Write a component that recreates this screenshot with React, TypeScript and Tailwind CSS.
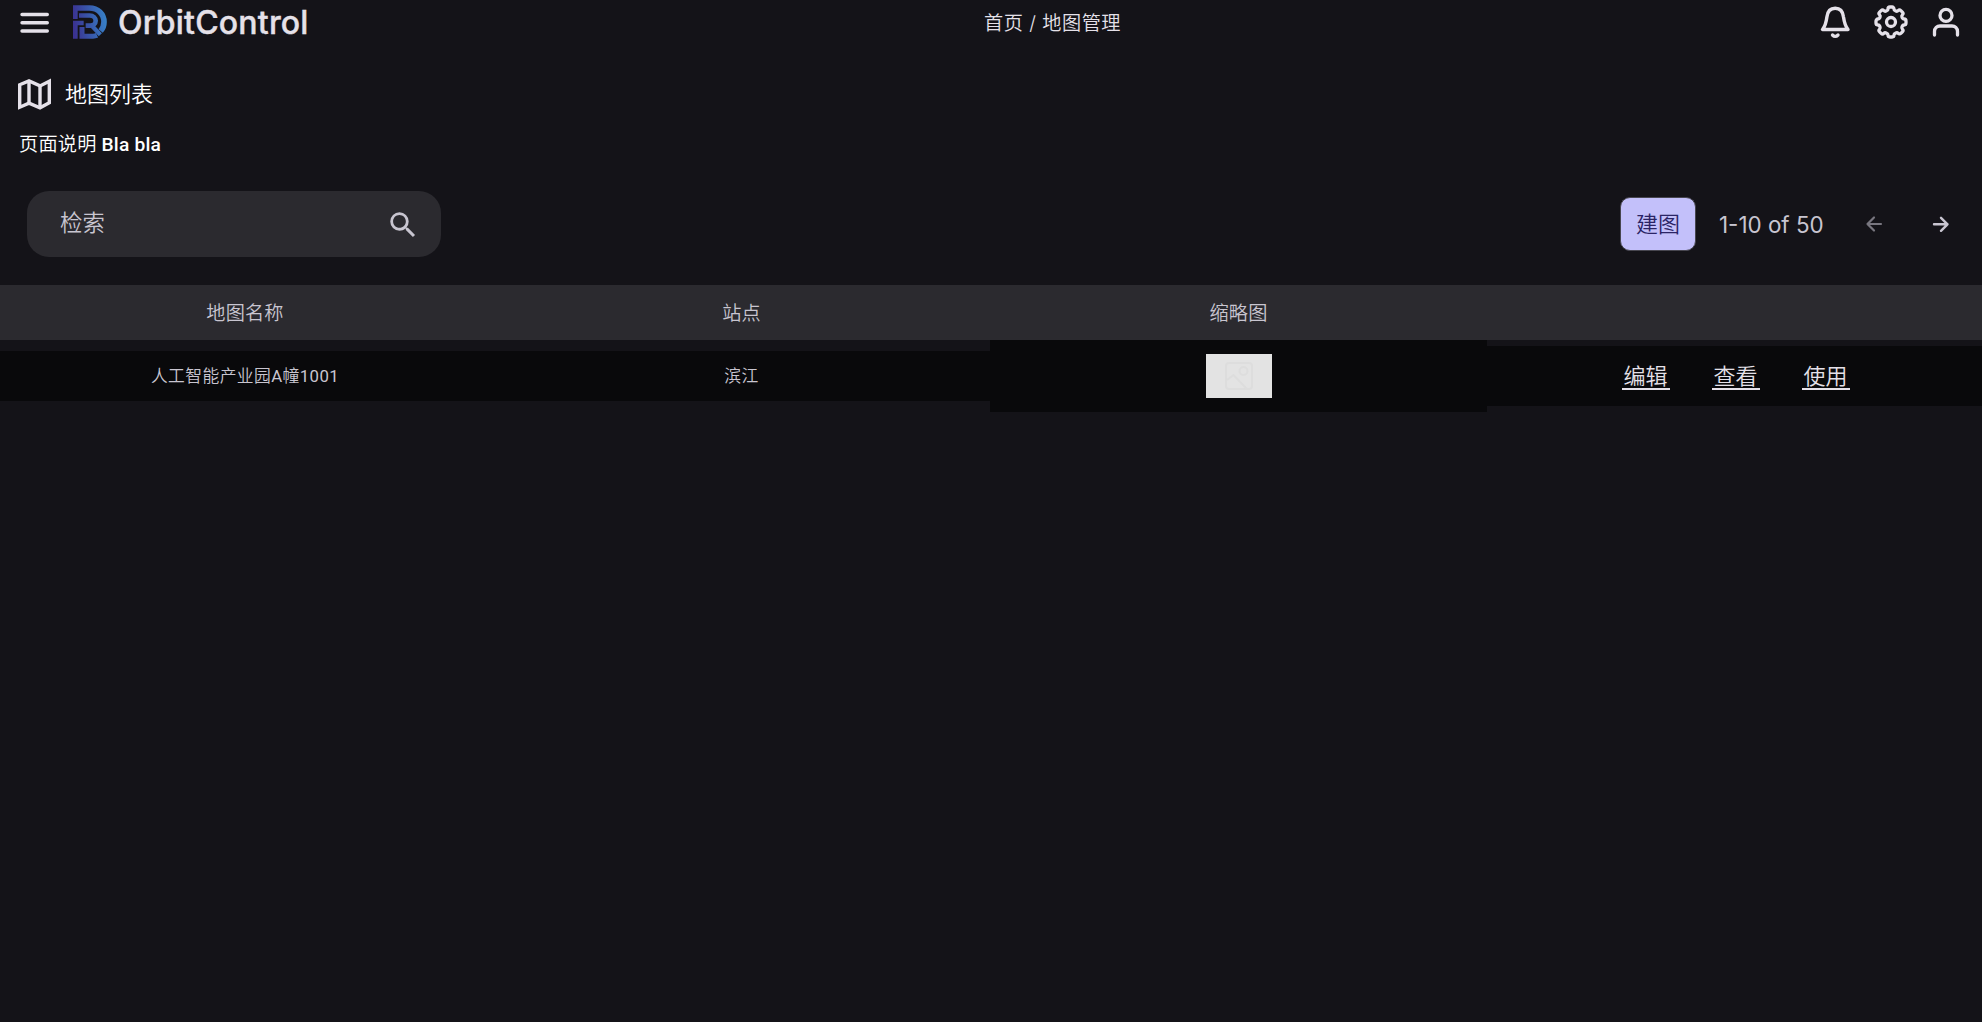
import { MdSearch } from "react-icons/md";

const GEAR =
  "M14 3.269C14 2.568 13.432 2 12.731 2H11.27C10.568 2 10 2.568 10 3.269v0c0 .578-.396 1.074-.935 1.286c-.085.035-.17.07-.253.106c-.531.23-1.162.16-1.572-.249v0a1.269 1.269 0 0 0-1.794 0L4.412 5.446a1.269 1.269 0 0 0 0 1.794v0c.41.41.48 1.04.248 1.572a7.946 7.946 0 0 0-.105.253c-.212.539-.708.935-1.286.935v0C2.568 10 2 10.568 2 11.269v1.462C2 13.432 2.568 14 3.269 14v0c.578 0 1.074.396 1.286.935c.034.085.07.17.105.253c.231.531.161 1.162-.248 1.572v0a1.269 1.269 0 0 0 0 1.794l1.034 1.034a1.269 1.269 0 0 0 1.794 0v0c.41-.41 1.04-.48 1.572-.249c.083.037.168.072.253.106c.539.212.935.708.935 1.286v0c0 .701.568 1.269 1.269 1.269h1.462c.701 0 1.269-.568 1.269-1.269v0c0-.578.396-1.074.935-1.287c.085-.033.17-.068.253-.104c.531-.232 1.162-.161 1.571.248v0a1.269 1.269 0 0 0 1.795 0l1.034-1.034a1.269 1.269 0 0 0 0-1.794v0c-.41-.41-.48-1.04-.249-1.572c.037-.083.072-.168.106-.253c.212-.539.708-.935 1.286-.935v0c.701 0 1.269-.568 1.269-1.269v-1.462c0-.701-.568-1.269-1.269-1.269v0c-.578 0-1.074-.396-1.287-.935a7.755 7.755 0 0 0-.105-.253c-.23-.531-.16-1.162.249-1.572v0a1.269 1.269 0 0 0 0-1.794l-1.034-1.034a1.269 1.269 0 0 0-1.794 0v0c-.41.41-1.04.48-1.572.249a7.913 7.913 0 0 0-.253-.106C14.396 4.343 14 3.847 14 3.27v0Z";

function Logo() {
  return (
    <svg className="mb-px ml-[21px] h-[34px] w-[34px]" viewBox="0 0 102 102">
      <defs>
        <linearGradient id="brand" gradientUnits="userSpaceOnUse" x1="0" y1="50" x2="102" y2="40">
          <stop offset="0" stopColor="#3a3190" />
          <stop offset="1" stopColor="#3782c8" />
        </linearGradient>
      </defs>
      <g fill="none" stroke="url(#brand)">
        <path d="M0 9H49C75 9 93 27 93 51C93 62 90 70 83 78" strokeWidth="17" />
        <path d="M7 10V42" strokeWidth="14" />
        <path d="M18 31.500H50C61 31.500 68 39 68 47.500S61 62 52 62H38" strokeWidth="14" />
        <path d="M0 54H32M7 50V101" strokeWidth="14" />
        <path d="M27 66V93.500H60C65 93.500 68 93 72 91" strokeWidth="15" />
        <path d="M58 64L82 89" strokeWidth="13" />
      </g>
    </svg>
  );
}

function Header() {
  return (
    <header className="flex h-[45px] items-center text-[#e5e1e9]">
      <div className="flex flex-1 items-center">
        <svg className="ml-4 h-9 w-9" viewBox="0 0 36 36" fill="none" stroke="currentColor" strokeWidth="3.400" strokeLinecap="round">
          <path d="M6 9.500H31.300M6 17.800H31.300M6 26H31.300" />
        </svg>
        <Logo />
        <span className="ml-[11px] text-[32px] leading-none font-medium tracking-[0.2px] [-webkit-text-stroke:0.4px_#e5e1e9]">OrbitControl</span>
      </div>
      <nav className="mt-[3px] ml-[141px] text-[19.2px] leading-none font-[350] tracking-[0.5px]">首页 / 地图管理</nav>
      <div className="flex flex-1 items-center justify-end gap-[19px] pr-[18px]">
        <svg className="-mt-px mr-px h-9 w-9" viewBox="0 0 36 36" fill="none" stroke="currentColor" strokeWidth="3.400" strokeLinecap="round" strokeLinejoin="round">
          <path d="M5.500 25.500H31C28.500 22.500 27.500 20 26.500 13C25.800 7 23 4.300 18.200 4.300S10.600 7 9.900 13C9 20 8 22.500 5.500 25.500Z" />
          <path d="M15.500 31Q18.200 33.800 21 31" />
        </svg>
        <svg className="-mt-px h-9 w-9" viewBox="0 0 24 24" fill="none" stroke="currentColor" strokeWidth="2.200">
          <path d={GEAR} />
          <circle cx="12" cy="12" r="3" />
        </svg>
        <svg className="-mt-px h-9 w-9" viewBox="0 0 36 36" fill="none" stroke="currentColor" strokeWidth="3.300" strokeLinecap="round">
          <circle cx="18" cy="11.400" r="6" />
          <path d="M6.500 31V27.500C6.500 24 9 22 12 22H24C27 22 29.500 24 29.500 27.500V31" />
        </svg>
      </div>
    </header>
  );
}

const columns = ["地图名称", "站点", "缩略图", ""];
const actions = ["编辑", "查看", "使用"];

function Thumbnail() {
  return (
    <div className="flex h-11 w-[66px] items-center justify-center bg-[#e3e3e3]">
      <svg className="h-7 w-7" viewBox="0 0 28 28" fill="none" stroke="#dddddd" strokeWidth="2">
        <rect x="1" y="1" width="26" height="26" rx="3" />
        <circle cx="18.500" cy="9" r="4" />
        <path d="M2 18L8.500 13L22 27" />
      </svg>
    </div>
  );
}

export default function App() {
  return (
    <div className="flex h-[1022px] w-[1982px] flex-col overflow-hidden bg-[#141318] font-[Inter,'Noto_Sans_CJK_SC',sans-serif] text-[#c8c5d0]">
      <Header />
      <div className="mt-[31px] flex h-9 items-center text-white">
        <svg className="ml-4 h-9 w-9 text-[#e5e1e9]" viewBox="0 0 36 36" fill="none" stroke="currentColor" strokeWidth="3.400" strokeLinejoin="miter">
          <path d="M3.700 8.800L13 4.900L24 9.900L33.300 5.200V26.700L24 31.800L13 27.200L3.700 31.200Z" />
          <path d="M13 4.900V27.200M24 9.900V31.800" />
        </svg>
        <h1 className="-mt-px ml-[13px] text-[22px] leading-none font-[350]">地图列表</h1>
      </div>
      <p className="mt-[19px] ml-[19px] h-7 font-[Roboto,'Noto_Sans_CJK_SC',sans-serif] text-[19.2px] leading-7 font-medium tracking-[0.2px] text-white">
        <span className="font-[350]">页面说明</span> Bla bla
      </p>
      <div className="mt-[32px] flex h-[66px] items-center">
        <div className="ml-[27px] flex h-[66px] w-[414px] items-center justify-between rounded-[22px] bg-[#2b2a2f] pr-[21px] pl-[33px]">
          <span className="-mt-0.5 text-[22.4px] leading-none font-[350]">检索</span>
          <MdSearch className="mt-px h-[34px] w-[34px]" />
        </div>
        <button className="ml-auto h-[54px] w-[76px] rounded-[10px] border border-[#47464f] bg-[#c3c0fa] text-[22px] leading-none font-[350] text-[#2a2465]">建图</button>
        <span className="mt-0.5 ml-[23px] w-[106px] text-[22.4px] leading-none whitespace-nowrap">1-10 of 50</span>
        <svg className="ml-[39px] h-5 w-5 text-[#78767f]" viewBox="0 0 20 20" fill="none" stroke="currentColor" strokeWidth="2.200" strokeLinecap="round" strokeLinejoin="round">
          <path d="M17 10H3.500M10 3.500L3.500 10L10 16.500" />
        </svg>
        <svg className="mr-[31px] ml-[47px] h-5 w-5" viewBox="0 0 20 20" fill="none" stroke="currentColor" strokeWidth="2.400" strokeLinecap="round" strokeLinejoin="round">
          <path d="M3 10.300H16.500M10 3.800L16.500 10.300L10 16.800" />
        </svg>
      </div>
      <div className="mt-[28px] grid h-[55px] grid-cols-[490px_500px_497px_495px] bg-[#2b2a2f]">
        {columns.map((name, i) => (
          <div key={i} className="flex items-center justify-center pt-0.5 text-[19.2px] leading-none font-[350] tracking-[0.15px] nth-2:pl-[3px]">
            {name}
          </div>
        ))}
      </div>
      <div className="grid h-[72px] grid-cols-[490px_500px_497px_495px] items-center font-[Roboto,'Noto_Sans_CJK_SC',sans-serif] text-[16.8px] leading-none tracking-[0.4px]">
        <div className="flex h-[50px] items-center justify-center bg-[#09090b]">
          <span>
            <span className="font-[350]">人工智能产业园</span>A<span className="font-[350]">幢</span>1001
          </span>
        </div>
        <div className="flex h-[50px] items-center justify-center bg-[#09090b] pl-[3px] font-[350]">滨江</div>
        <div className="flex h-[72px] items-center justify-center bg-[#09090b]">
          <Thumbnail />
        </div>
        <div className="flex h-[60px] items-center justify-center gap-[42px] bg-[#09090b] pl-[2px] text-[22px] font-[350] tracking-normal text-[#e5e1e9]">
          {actions.map((label) => (
            <a key={label} className="mt-0.5 h-[26px] w-12 border-b-2 border-[#e5e1e9] text-center leading-[25px]">
              {label}
            </a>
          ))}
        </div>
      </div>
    </div>
  );
}
